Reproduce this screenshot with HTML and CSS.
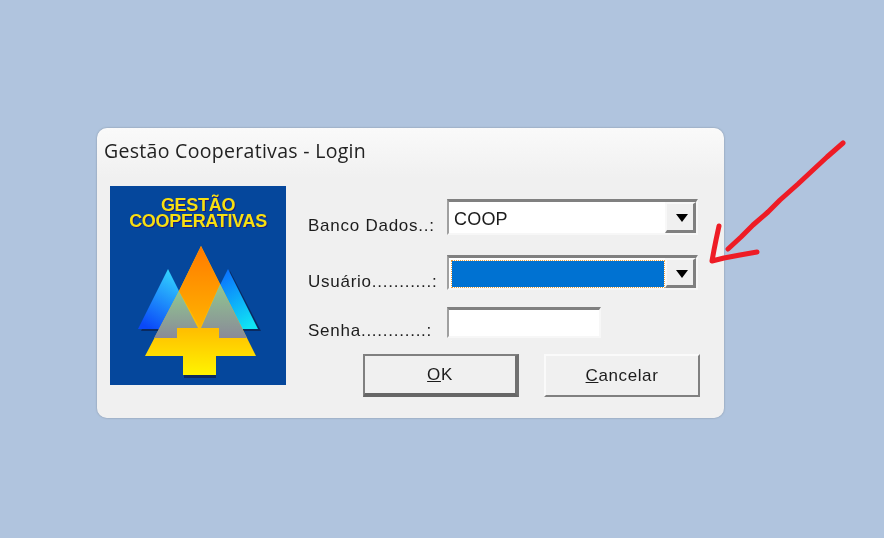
FILE: index.html
```html
<!DOCTYPE html>
<html lang="pt">
<head>
<meta charset="utf-8">
<title>Gestão Cooperativas - Login</title>
<link rel="stylesheet" href="styles.css">
</head>
<body>
<div class="window">
  <div class="titlebar">Gestão Cooperativas - Login</div>
  <div class="content">
    <div class="logo">
      <div class="logo-text">GESTÃO<br>COOPERATIVAS</div>
      <svg class="logo-art" viewBox="0 0 176 199" width="176" height="199">
        <defs>
          <linearGradient id="gl" x1="0.8" y1="0" x2="0.2" y2="1"><stop offset="0" stop-color="#38e8ff"/><stop offset="1" stop-color="#0a48f8"/></linearGradient>
          <linearGradient id="gr" x1="0.2" y1="0.1" x2="0.8" y2="1"><stop offset="0" stop-color="#0a68ff"/><stop offset="1" stop-color="#10e4f4"/></linearGradient>
          <linearGradient id="go" x1="0" y1="0" x2="0" y2="1"><stop offset="0" stop-color="#ff7a00"/><stop offset="1" stop-color="#ffb400"/></linearGradient>
          <linearGradient id="gy" gradientUnits="userSpaceOnUse" x1="0" y1="143" x2="0" y2="189"><stop offset="0" stop-color="#ffbe00"/><stop offset="1" stop-color="#fff400"/></linearGradient>
          <linearGradient id="gg" x1="0" y1="0" x2="0" y2="1"><stop offset="0" stop-color="#90c890"/><stop offset="1" stop-color="#8a8a98"/></linearGradient>
        </defs>
        <polygon points="60,85 31,145 60,145" fill="#0a2a60"/>
        <polygon points="120,85 151,145 90,145" fill="#0a2a60"/>
        <polygon points="58,83 28,143 88,143" fill="url(#gl)"/>
        <polygon points="118,83 148,143 88,143" fill="url(#gr)"/>
        <polygon points="74,170 106,170 106,192 74,192" fill="#0a2a60"/>
        <polygon points="91,60 110,98 146,170 106,170 106,189 73,189 73,170 35,170 69,105" fill="url(#gy)"/>
        <polygon points="69,105 88,142 67,142 67,152 44,152" fill="url(#gg)"/>
        <polygon points="110,98 137,152 109,152 109,142 91,142" fill="url(#gg)"/>
        <polygon points="91,60 110,98 90,142 69,105" fill="url(#go)"/>
      </svg>
    </div>
    <form class="form">
      <div class="row row-banco">
        <label class="label label-banco">Banco Dados..:</label>
        <div class="combo">
          <div class="combo-value">COOP</div>
          <div class="combo-btn"><span class="caret"></span></div>
        </div>
      </div>
      <div class="row row-usuario">
        <label class="label label-usuario">Usuário...........:</label>
        <div class="combo">
          <div class="combo-value selected"></div>
          <div class="combo-btn"><span class="caret"></span></div>
        </div>
      </div>
      <div class="row row-senha">
        <label class="label label-senha">Senha............:</label>
        <div class="input"></div>
      </div>
      <div class="buttons">
        <div class="btn btn-default"><span><u>O</u>K</span></div>
        <div class="btn"><span><u>C</u>ancelar</span></div>
      </div>
    </form>
  </div>
</div>
<svg class="arrow" viewBox="0 0 884 538" width="884" height="538">
  <path d="M843 143 L827 157 L813 170 L798 184 L780 200 L768 212 L753 225 L741 237 L728 249" fill="none"/>
  <path d="M719 226 L716 240 L714 250 L712 261 L724 258 L740 255 L757 252" fill="none"/>
</svg>
</body>
</html>
```
FILE: styles.css
```css
* { box-sizing: border-box; }
html, body { margin: 0; height: 100%; }
body {
  background: #b0c4de;
  overflow: hidden;
  font-family: "Liberation Sans", Arial, sans-serif;
  color: #1c1c1c;
  position: relative;
  padding: 128px 0 0 97px;
}
.window {
  width: 627px;
  height: 290px;
  background: linear-gradient(#fafafa 0, #f0f0f0 50px);
  border-radius: 10px;
  box-shadow: 0 0 2px #7f8a98;
  filter: blur(0.35px);
}
.titlebar {
  height: 58px;
  padding: 10px 0 0 7px;
  font-family: "Open Sans", sans-serif;
  font-size: 19.5px;
  line-height: 25px;
  letter-spacing: 0.3px;
  color: #222;
}
.content { display: flex; padding-left: 13px; }
.logo {
  position: relative;
  width: 176px;
  height: 199px;
  background: #05479c;
  flex: none;
}
.logo-text {
  padding-top: 11px;
  text-align: center;
  font-size: 18px;
  line-height: 16px;
  font-weight: 700;
  letter-spacing: -0.3px;
  color: #f7df10;
  text-shadow: 1px 1px 0 #1a1a80;
}
.logo-art { position: absolute; left: 0; top: 0; }
.form { margin-left: 22px; width: 393px; }
.row { display: flex; align-items: flex-end; }
.row-banco { height: 36px; margin-top: 13px; }
.row-usuario { height: 35px; margin-top: 20px; }
.row-senha { height: 31px; margin-top: 17px; }
.label {
  width: 139px;
  flex: none;
  font-size: 17px;
  line-height: 20px;
  letter-spacing: 0.75px;
}
.label-banco { margin-bottom: -1px; }
.label-usuario { margin-bottom: -2px; }
.label-senha { margin-bottom: -3px; }
.combo {
  width: 251px;
  height: 100%;
  display: flex;
  background: #fff;
  border-style: solid;
  border-color: #808080 #f7f7f7 #f7f7f7 #a0a0a0;
  border-width: 3px 2px 2px 2px;
}
.combo-value {
  flex: 1;
  padding: 6px 0 0 5px;
  font-size: 18px;
  line-height: 22px;
  letter-spacing: 0.2px;
}
.combo-value.selected {
  margin: 3px 0 1px 3px;
  background: #0072d2;
  outline: 1px dotted #e8a040;
}
.combo-btn {
  width: 31px;
  margin-left: 1px;
  padding: 2px 0 0 3px;
  background: #f0f0f0;
  border-right: 3px solid #808080;
  border-bottom: 3px solid #808080;
  border-top: 2px solid #f8f8f8;
  border-left: 2px solid #f8f8f8;
  display: flex;
  align-items: center;
  justify-content: center;
}
.caret {
  width: 0;
  height: 0;
  border-left: 6px solid transparent;
  border-right: 6px solid transparent;
  border-top: 8px solid #000;
}
.input {
  width: 154px;
  height: 100%;
  background: #fff;
  border-style: solid;
  border-color: #808080 #f7f7f7 #f7f7f7 #a0a0a0;
  border-width: 3px 2px 2px 2px;
}
.buttons {
  display: flex;
  margin-top: 16px;
  margin-left: 55px;
  gap: 25px;
}
.btn {
  width: 156px;
  height: 43px;
  background: #f0f0f0;
  border-style: solid;
  border-color: #fafafa #808080 #808080 #fafafa;
  border-width: 2px;
  display: flex;
  align-items: center;
  justify-content: center;
  font-size: 17px;
  letter-spacing: 0.6px;
}
.btn-default {
  border-color: #808080 #707070 #666 #808080;
  border-width: 2px 4px 4px 2px;
}
.arrow { position: absolute; left: 0; top: 0; pointer-events: none; }
.arrow path {
  stroke: #ee1c25;
  stroke-width: 5;
  stroke-linecap: round;
  stroke-linejoin: round;
}
```
